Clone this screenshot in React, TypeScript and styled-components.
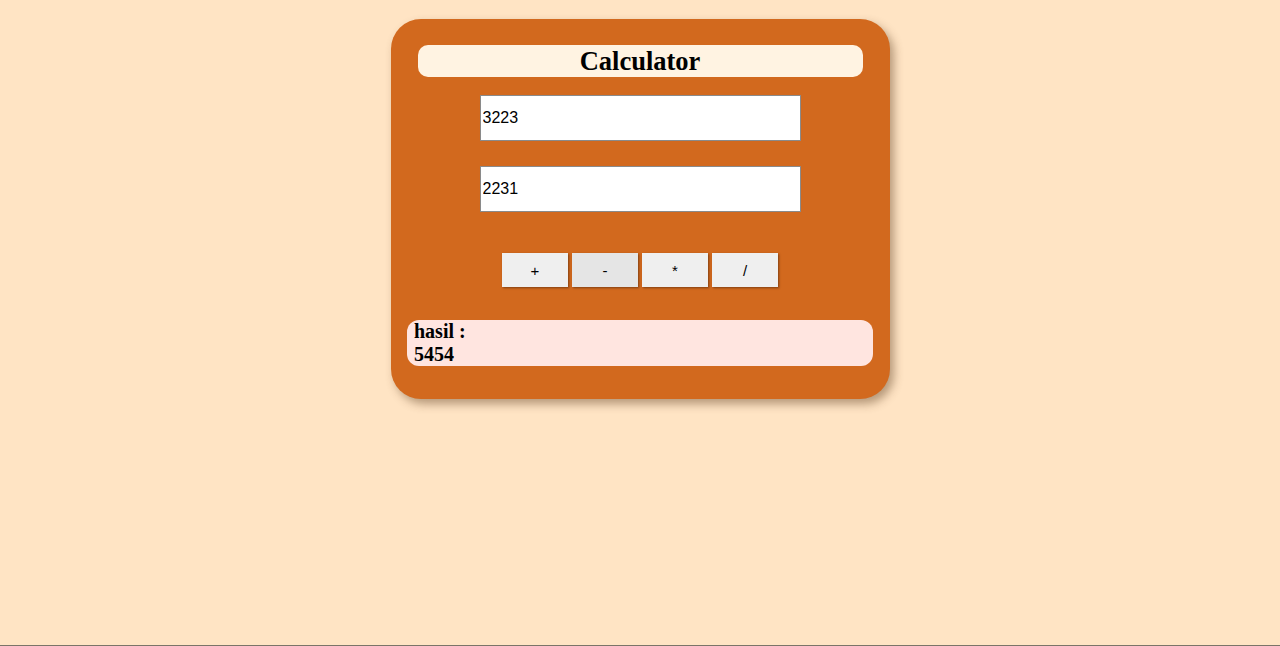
import React, { useState } from 'react'
import styled, { createGlobalStyle } from 'styled-components'

const GlobalStyle = createGlobalStyle`
  html, body {
    margin: 0;
    padding: 0;
    background: #ffe4c4;
  }
  #root {
    min-height: 100vh;
    box-sizing: border-box;
    border-bottom: 1px solid #7a7468;
    padding-top: 19px;
  }
`

const Card = styled.div`
  width: 499px;
  margin: 0 auto;
  box-sizing: border-box;
  background: #d2691e;
  border-radius: 30px;
  box-shadow: 4px 5px 10px rgba(90, 60, 30, 0.45);
  padding: 26px 0 33px;
  display: flex;
  flex-direction: column;
  align-items: center;
`

const Title = styled.h1`
  width: 445px;
  height: 32px;
  margin: 0;
  background: #fff3e2;
  border-radius: 10px;
  font-family: 'Liberation Serif', 'Times New Roman', serif;
  font-size: 26.5px;
  font-weight: bold;
  line-height: 32px;
  text-align: center;
  color: #000;
`

const Field = styled.input<{ $gap: number }>`
  width: 321px;
  height: 46px;
  box-sizing: border-box;
  margin-top: ${({ $gap }) => $gap}px;
  border: 1px solid #8a8a8a;
  padding: 0 2px;
  font-family: 'Liberation Sans', Arial, sans-serif;
  font-size: 16px;
  color: #000;
  background: #fff;
  outline: none;
`

const ButtonRow = styled.div`
  display: flex;
  gap: 4px;
  margin-top: 41px;
`

const OpButton = styled.button<{ $active?: boolean }>`
  width: 66px;
  height: 34px;
  border: none;
  background: ${({ $active }) => ($active ? '#e5e5e5' : '#efefef')};
  box-shadow: 1px 1px 2px rgba(60, 30, 10, 0.55);
  font-family: 'Liberation Sans', Arial, sans-serif;
  font-size: 15px;
  color: #000;
  cursor: pointer;
  padding: 0;
`

const Result = styled.div`
  width: 466px;
  height: 46px;
  box-sizing: border-box;
  margin-top: 33px;
  padding: 0 7px;
  background: #ffe5e0;
  border-radius: 12px;
  font-family: 'Liberation Serif', 'Times New Roman', serif;
  font-size: 20px;
  font-weight: bold;
  line-height: 23px;
  color: #000;
`

const ops = ['+', '-', '*', '/']

export default function App() {
  const [a, setA] = useState('3223')
  const [b, setB] = useState('2231')
  const [result, setResult] = useState<number>(5454)

  const calc = (op: string) => {
    const x = parseFloat(a)
    const y = parseFloat(b)
    if (op === '+') setResult(x + y)
    if (op === '-') setResult(x - y)
    if (op === '*') setResult(x * y)
    if (op === '/') setResult(x / y)
  }

  return (
    <>
      <GlobalStyle />
      <Card>
        <Title>Calculator</Title>
        <Field $gap={18} value={a} onChange={(e) => setA(e.target.value)} />
        <Field $gap={25} value={b} onChange={(e) => setB(e.target.value)} />
        <ButtonRow>
          {ops.map((op) => (
            <OpButton key={op} $active={op === '-'} onClick={() => calc(op)}>
              {op}
            </OpButton>
          ))}
        </ButtonRow>
        <Result>
          hasil :
          <br />
          {result}
        </Result>
      </Card>
    </>
  )
}
